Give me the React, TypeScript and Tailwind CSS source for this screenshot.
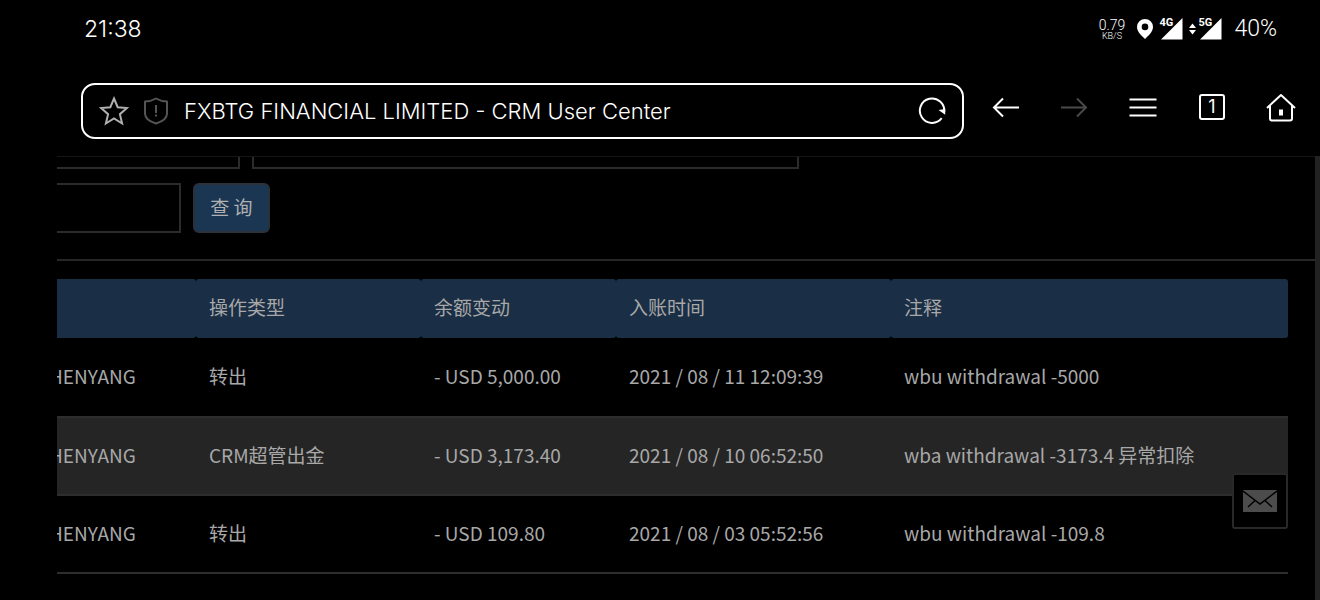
import * as React from "react";

interface Entry {
  account: string;
  type: string;
  change: string;
  time: string;
  note: string;
}

const entries: Entry[] = [
  {
    account: "HENYANG",
    type: "转出",
    change: "- USD 5,000.00",
    time: "2021 / 08 / 11 12:09:39",
    note: "wbu withdrawal -5000",
  },
  {
    account: "HENYANG",
    type: "CRM超管出金",
    change: "- USD 3,173.40",
    time: "2021 / 08 / 10 06:52:50",
    note: "wba withdrawal -3173.4 异常扣除",
  },
  {
    account: "HENYANG",
    type: "转出",
    change: "- USD 109.80",
    time: "2021 / 08 / 03 05:52:56",
    note: "wbu withdrawal -109.8",
  },
];

const headers = ["", "操作类型", "余额变动", "入账时间", "注释"];

const Signal = ({ label }: { label: string }) => (
  <span className="relative block h-6 w-6">
    <svg viewBox="0 0 24 24" className="h-6 w-6" fill="#fff" aria-hidden="true">
      <path d="M23.500 1v21.500H2z" />
    </svg>
    <span className="absolute top-0 left-0 text-[11px] leading-3 font-bold [text-shadow:1px_0_0_#000,1px_1px_0_#000]">
      {label}
    </span>
  </span>
);

const StatusBar = () => (
  <div className="flex h-14 items-center justify-between pt-0.5 pr-[43px] pl-[84px] font-light">
    <span className="text-[23px] leading-6">21:38</span>
    <div className="flex items-center font-[Roboto,sans-serif]">
      <div className="flex w-[27px] flex-col items-center">
        <span className="text-sm leading-[14px]">0.79</span>
        <span className="text-[9px] leading-[9px]">KB/S</span>
      </div>
      <svg viewBox="0 0 16 20" className="ml-3 h-5 w-4" fill="#fff" aria-hidden="true">
        <path
          fillRule="evenodd"
          d="M8 0a8 8 0 0 0-8 8c0 5 5 9 8 12 3-3 8-7 8-12a8 8 0 0 0-8-8zm0 4.600a3.300 3.300 0 1 1 0 6.600 3.300 3.300 0 0 1 0-6.600z"
        />
      </svg>
      <div className="ml-1.5 flex items-center">
        <Signal label="4G" />
        <svg viewBox="0 0 7 12" className="mr-0.5 ml-1.5 h-3 w-[7px]" fill="#fff" aria-hidden="true">
          <path d="M3.500 0.500 7 5H0zM0 7h7l-3.500 4.500z" />
        </svg>
        <Signal label="5G" />
      </div>
      <span className="ml-3 text-[23px] leading-6">40%</span>
    </div>
  </div>
);

const AddressBar = () => (
  <div className="flex h-14 min-w-0 flex-1 items-center rounded-[14px] border-2 border-white pr-4 pl-4">
    <button type="button" aria-label="Bookmark">
      <svg viewBox="0 0 30 30" className="h-[30px] w-[30px]" fill="none" stroke="#b0b0b0" strokeWidth="2">
        <path d="M15 2.500l3.700 8.700 9.300.8-7.100 6.200 2.200 9.300-8.100-5-8.100 5 2.200-9.300L2 12l9.300-.8z" />
      </svg>
    </button>
    <button type="button" aria-label="Site security" className="ml-3.5">
      <svg viewBox="0 0 26 28" className="h-7 w-[26px]" fill="none" stroke="#555" strokeWidth="2">
        <path d="M13 1.500c3.500 2 7 3 11 3v12c0 5-5.500 8.300-11 10-5.500-1.700-11-5-11-10v-12c4 0 7.500-1 11-3z" strokeLinejoin="round" />
        <path d="M13 8v8M13 17.500v2" />
      </svg>
    </button>
    <input
      aria-label="Page address"
      readOnly
      value="FXBTG FINANCIAL LIMITED - CRM User Center"
      className="ml-[15px] min-w-0 flex-1 bg-transparent text-[22px] leading-7 font-light outline-none"
    />
    <button type="button" aria-label="Reload">
      <svg viewBox="0 0 28 28" className="h-7 w-7" fill="none" stroke="#fff" strokeWidth="2">
        <path d="M23.700 21.200A12.200 12.200 0 1 1 26.200 15" />
        <path d="M20.500 13l6.700 4.800V12z" fill="#fff" stroke="none" />
      </svg>
    </button>
  </div>
);

const NavButton = ({ label, children }: { label: string; children: React.ReactNode }) => (
  <button type="button" aria-label={label} className="h-[30px] w-[30px]">
    <svg viewBox="0 0 30 30" className="h-[30px] w-[30px]" fill="none" stroke="#fff" strokeWidth="2">
      {children}
    </svg>
  </button>
);

const Toolbar = () => (
  <nav className="flex items-start pt-[27px] pr-6 pb-[17px] pl-[81px]">
    <AddressBar />
    <div className="ml-[26px] flex gap-[39px] pt-[9px]">
      <NavButton label="Back">
        <path d="M29 15.500H4M13 6.500l-9 9 9 9" />
      </NavButton>
      <NavButton label="Forward">
        <path d="M2 15.500h25M18 6.500l9 9-9 9" stroke="#4a4a4a" />
      </NavButton>
      <NavButton label="Menu">
        <path d="M1.500 7.500h27M1.500 15.500h27M1.500 23.500h27" />
      </NavButton>
      <button type="button" aria-label="Tabs" className="flex h-[30px] w-[30px] items-center justify-center">
        <span className="flex h-[26px] w-[26px] items-center justify-center rounded-[3px] border-2 border-white text-lg leading-5">
          1
        </span>
      </button>
      <NavButton label="Home">
        <path d="M1 16 15 3l14 13" strokeLinejoin="round" />
        <path d="M4 14v12.500a2 2 0 0 0 2 2h18a2 2 0 0 0 2-2V14" />
        <path d="M13 17.500h4v6h-4z" fill="#fff" stroke="none" />
      </NavButton>
    </div>
  </nav>
);

const Filters = () => (
  <form className="border-b-2 border-[#272727] pb-[26px]" onSubmit={(e) => e.preventDefault()}>
    {/* this row is mostly scrolled out under the toolbar */}
    <div className="flex h-3 items-end gap-3 overflow-hidden">
      <input aria-label="Account" className="h-[50px] w-[183px] shrink-0 border-2 border-l-0 border-[#2b2b2b] bg-black px-3" />
      <input aria-label="Date range" className="h-[50px] w-[547px] border-2 border-[#2b2b2b] bg-black px-3" />
    </div>
    <div className="mt-3.5 flex gap-3">
      <input aria-label="Keyword" className="h-[50px] w-[124px] border-2 border-l-0 border-[#2b2b2b] bg-black px-3" />
      <button
        type="submit"
        className="h-[50px] w-[77px] rounded-md border-2 border-[#2b3138] bg-[#1b3653] pb-0.5 text-[19px] text-[#b0b0b0]"
      >
        查 询
      </button>
    </div>
  </form>
);

const EntryTable = () => (
  <div className="mr-[27px] overflow-hidden">
    <table className="-ml-2 w-[calc(100%+8px)] table-fixed border-separate border-spacing-0 text-left">
      <colgroup>
        <col className="w-[147px]" />
        <col className="w-[225px]" />
        <col className="w-[195px]" />
        <col className="w-[275px]" />
        <col />
      </colgroup>
      <thead>
        <tr>
          {headers.map((header, i) => (
            <th key={i} className="h-[59px] rounded-[3px] bg-[#1a2e45] px-[13px] pb-[3px] font-normal">
              {header}
            </th>
          ))}
        </tr>
      </thead>
      <tbody className="[&_td]:h-[78px] [&_td]:border-b-2 [&_td]:border-[#2d2d2d] [&_td]:px-[13px] [&_td]:pb-0.5 [&_tr:first-child_td]:h-20">
        {entries.map((entry, i) => (
          <tr key={entry.time} className={i % 2 === 1 ? "bg-[#252525]" : ""}>
            <td className="!px-0">{entry.account}</td>
            <td>{entry.type}</td>
            <td>{entry.change}</td>
            <td>{entry.time}</td>
            <td>{entry.note}</td>
          </tr>
        ))}
      </tbody>
    </table>
  </div>
);

export default function App() {
  return (
    <div className="relative flex h-screen min-h-[600px] flex-col overflow-hidden bg-black font-[Inter,'Noto_Sans_CJK_SC',sans-serif] text-white">
      <header>
        <StatusBar />
        <Toolbar />
      </header>
      <main className="flex flex-1 pl-[57px]">
        <div className="min-w-0 flex-1 border-t border-[#151515] font-['Noto_Sans_CJK_SC',sans-serif] text-[19px] leading-7 text-[#a8a8a8]">
          <Filters />
          <div className="pt-[18px]">
            <EntryTable />
          </div>
        </div>
        <div className="w-[5px] bg-[#222]" />
      </main>
      <button
        type="button"
        aria-label="Messages"
        className="absolute right-8 bottom-[71px] flex h-14 w-14 items-center justify-center rounded-[3px] border-2 border-[#292929] bg-black"
      >
        <svg viewBox="0 0 34 22" className="h-[22px] w-[34px]">
          <path d="M0 0h34v22H0z" fill="#4c4c4c" />
          <path d="M0 1l17 13L34 1M12 10.500l-7 6.500M22 10.500l7 6.500" fill="none" stroke="#000" strokeWidth="1.500" />
        </svg>
      </button>
    </div>
  );
}
